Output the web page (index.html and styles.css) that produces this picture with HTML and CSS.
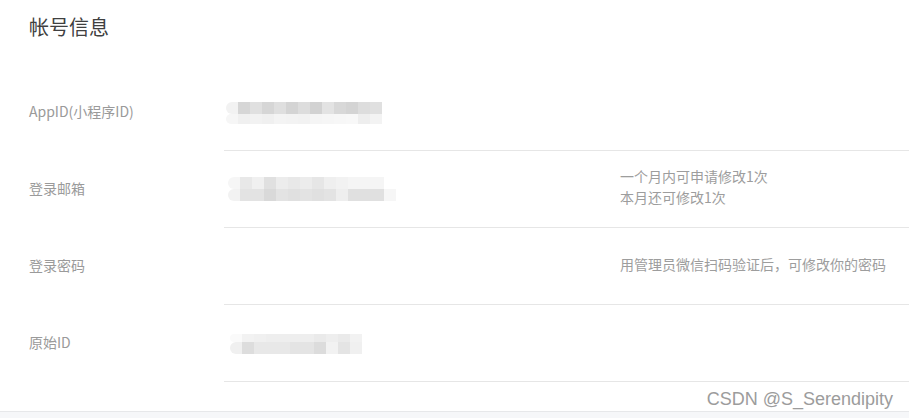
FILE: index.html
```html
<!DOCTYPE html>
<html lang="zh-CN">
<head>
    <meta charset="UTF-8">
    <meta name="viewport" content="width=device-width, initial-scale=1.0">
    <title>帐号信息</title>
    <link rel="stylesheet" href="styles.css">
</head>
<body>
    <div class="card">
        <h2 class="title">帐号信息</h2>
        <div class="row">
            <div class="label">AppID(小程序ID)</div>
            <div class="cell">
                <div class="value">
                    <div class="mosaic m-first">
                        <div class="strip">
                            <i class="fade c-f2"></i><i class="c-d6"></i><i class="c-e0"></i><i class="c-d6"></i><i class="c-df"></i><i class="c-d4"></i><i class="c-dd"></i><i class="c-d2"></i><i class="c-e3"></i><i class="c-d8"></i><i class="c-d4"></i><i class="c-dd"></i><i class="c-e0"></i>
                        </div>
                        <div class="strip low">
                            <i class="fade c-f6"></i><i class="c-f0"></i><i class="c-f2"></i><i class="c-f0"></i><i class="c-f4"></i><i class="c-f3"></i><i class="c-f2"></i><i class="c-f5"></i><i class="c-f6"></i><i class="c-f7"></i><i class="c-f8"></i><i class="c-ee"></i><i class="c-f3"></i>
                        </div>
                    </div>
                </div>
            </div>
        </div>
        <div class="row">
            <div class="label">登录邮箱</div>
            <div class="cell">
                <div class="value">
                    <div class="mosaic m-second">
                        <div class="strip">
                            <i class="fade c-f6"></i><i class="c-e8"></i><i class="c-f0"></i><i class="c-e0"></i><i class="c-ec"></i><i class="c-e8"></i><i class="c-ec"></i><i class="c-e6"></i><i class="c-ef"></i><i class="c-f2"></i><i class="c-f5"></i><i class="c-f5"></i><i class="c-f5"></i>
                        </div>
                        <div class="strip">
                            <i class="fade c-f2"></i><i class="c-e3"></i><i class="c-e3"></i><i class="c-d9"></i><i class="c-e3"></i><i class="c-e0"></i><i class="c-e3"></i><i class="c-e0"></i><i class="c-e3"></i><i class="c-ee"></i><i class="c-e0"></i><i class="c-e0"></i><i class="c-e0"></i><i class="c-f6"></i>
                        </div>
                    </div>
                </div>
                <div class="tip">一个月内可申请修改1次<br>本月还可修改1次</div>
            </div>
        </div>
        <div class="row">
            <div class="label">登录密码</div>
            <div class="cell">
                <div class="value"></div>
                <div class="tip">用管理员微信扫码验证后，可修改你的密码</div>
            </div>
        </div>
        <div class="row">
            <div class="label">原始ID</div>
            <div class="cell">
                <div class="value">
                    <div class="mosaic m-third">
                        <div class="strip thin">
                            <i class="fade c-fa"></i><i class="c-f2"></i><i class="c-f0"></i><i class="c-ee"></i><i class="c-ee"></i><i class="c-ee"></i><i class="c-ee"></i><i class="c-ea"></i><i class="c-ee"></i><i class="c-ea"></i><i class="c-f2"></i>
                        </div>
                        <div class="strip">
                            <i class="fade c-f0"></i><i class="c-dd"></i><i class="c-e8"></i><i class="c-e8"></i><i class="c-e8"></i><i class="c-e4"></i><i class="c-e4"></i><i class="c-dc"></i><i class="c-f2"></i><i class="c-e4"></i><i class="c-f0"></i>
                        </div>
                    </div>
                </div>
            </div>
        </div>
    </div>
    <div class="watermark">CSDN @S_Serendipity</div>
</body>
</html>
```
FILE: styles.css
```css
body {
    margin: 0;
    background-color: #f6f7f9;
    font-family: "Noto Sans CJK SC", "Liberation Sans", sans-serif;
    position: relative;
    height: 418px;
    overflow: hidden;
}
.card {
    background-color: #fff;
    height: 411px;
    border-bottom: 1px solid #e7e8ea;
}
.title {
    margin: 0;
    height: 74px;
    padding: 13px 0 0 29px;
    box-sizing: border-box;
    font-size: 20px;
    line-height: 28px;
    font-weight: normal;
    color: #404040;
}
.row {
    display: flex;
    height: 77px;
}
.label {
    width: 224px;
    padding-left: 29px;
    box-sizing: border-box;
    display: flex;
    align-items: center;
    padding-bottom: 3px;
    font-size: 14px;
    color: #9a9a9a;
}
.cell {
    flex: 1;
    display: flex;
    align-items: center;
    border-bottom: 1px solid #e6e6e6;
}
.value {
    width: 396px;
    flex-shrink: 0;
}
.tip {
    font-size: 14px;
    line-height: 21px;
    margin-top: -4px;
    color: #9d9d9d;
}
.mosaic {
    display: flex;
    flex-direction: column;
    filter: blur(0.6px);
}
.m-first {
    margin-left: 2px;
    margin-top: 2px;
}
.m-second {
    margin-left: 4px;
    margin-top: 0;
}
.m-third {
    margin-left: 6px;
    margin-top: 2px;
}
.strip {
    display: flex;
    height: 12px;
}
.strip.low {
    height: 10px;
}
.strip.thin {
    height: 8px;
}
.strip i {
    width: 12px;
    height: 100%;
}
.strip i.fade {
    border-radius: 6px 0 0 6px;
}
.c-d2 { background-color: #d2d2d2; }
.c-d4 { background-color: #d4d4d4; }
.c-d6 { background-color: #d6d6d6; }
.c-d8 { background-color: #d8d8d8; }
.c-d9 { background-color: #d9d9d9; }
.c-dc { background-color: #dcdcdc; }
.c-dd { background-color: #dddddd; }
.c-df { background-color: #dfdfdf; }
.c-e0 { background-color: #e0e0e0; }
.c-e3 { background-color: #e3e3e3; }
.c-e4 { background-color: #e4e4e4; }
.c-e6 { background-color: #e6e6e6; }
.c-e8 { background-color: #e8e8e8; }
.c-ea { background-color: #eaeaea; }
.c-ec { background-color: #ececec; }
.c-ee { background-color: #eeeeee; }
.c-ef { background-color: #efefef; }
.c-f0 { background-color: #f0f0f0; }
.c-f2 { background-color: #f2f2f2; }
.c-f3 { background-color: #f3f3f3; }
.c-f4 { background-color: #f4f4f4; }
.c-f5 { background-color: #f5f5f5; }
.c-f6 { background-color: #f6f6f6; }
.c-f7 { background-color: #f7f7f7; }
.c-f8 { background-color: #f8f8f8; }
.c-fa { background-color: #fafafa; }
.watermark {
    position: absolute;
    right: 16px;
    top: 387px;
    font-family: "Liberation Sans", Arial, sans-serif;
    font-size: 18px;
    line-height: 24px;
    color: #9c9c9c;
}
```
